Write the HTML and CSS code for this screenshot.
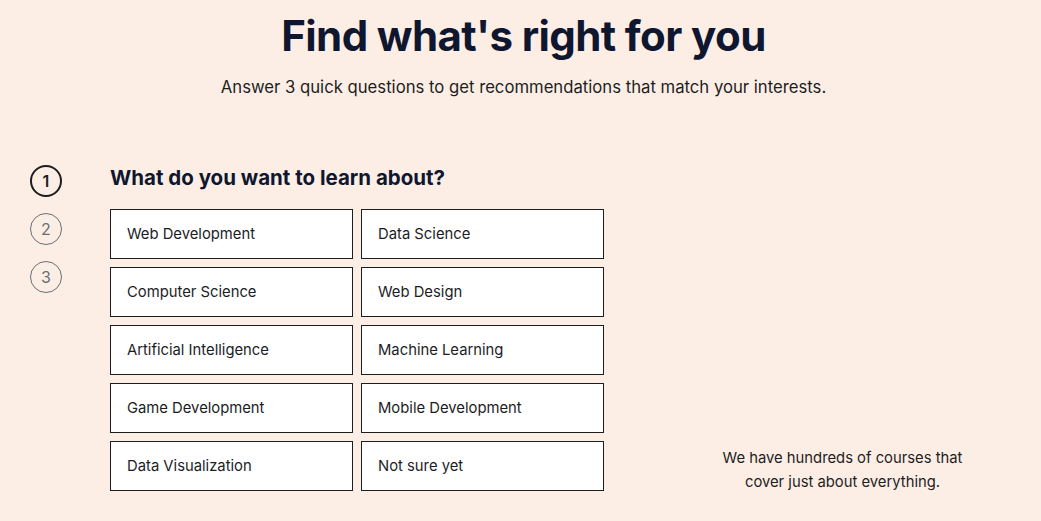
FILE: index.html
```html
<!DOCTYPE html>
<html lang="en">
<head>
<meta charset="utf-8">
<title>Find what's right for you</title>
<link rel="stylesheet" href="styles.css">
</head>
<body>
<header class="hero">
  <h1 class="hero-title">Find what's right for you</h1>
  <p class="hero-sub">Answer 3 quick questions to get recommendations that match your interests.</p>
</header>
<main class="quiz">
  <ol class="steps">
    <li class="step step-active">1</li>
    <li class="step">2</li>
    <li class="step">3</li>
  </ol>
  <section class="question">
    <h2 class="question-title">What do you want to learn about?</h2>
    <div class="options">
      <button class="option">Web Development</button>
      <button class="option">Data Science</button>
      <button class="option">Computer Science</button>
      <button class="option">Web Design</button>
      <button class="option">Artificial Intelligence</button>
      <button class="option">Machine Learning</button>
      <button class="option">Game Development</button>
      <button class="option">Mobile Development</button>
      <button class="option">Data Visualization</button>
      <button class="option">Not sure yet</button>
    </div>
  </section>
  <aside class="note">
    <p>We have hundreds of courses that<br>cover just about everything.</p>
  </aside>
</main>
</body>
</html>
```
FILE: styles.css
```css
* { box-sizing: border-box; }
html, body { margin: 0; padding: 0; }
body {
  background: #fdeee5;
  color: #1c1d1f;
  font-family: "Inter", "Liberation Sans", sans-serif;
  width: 1041px;
  height: 521px;
  overflow: hidden;
}
.hero {
  text-align: center;
  padding-top: 10px;
  padding-left: 6px;
}
.hero-title {
  margin: 0;
  font-size: 42px;
  font-weight: 700;
  line-height: 52px;
  color: #0f1730;
  letter-spacing: -0.6px;
}
.hero-sub {
  margin: 13px 0 0;
  font-size: 16.7px;
  line-height: 24px;
  color: #1c1d1f;
}
.quiz {
  display: flex;
  padding-left: 30px;
  margin-top: 66px;
}
.steps {
  list-style: none;
  margin: 0;
  padding: 0;
  width: 32px;
  display: flex;
  flex-direction: column;
  gap: 16px;
}
.step {
  width: 32px;
  height: 32px;
  border-radius: 50%;
  border: 1px solid #6a6f73;
  color: #6a6f73;
  display: flex;
  align-items: center;
  justify-content: center;
  font-size: 16px;
}
.step-active {
  border: 2px solid #1c1d1f;
  color: #1c1d1f;
  font-weight: 600;
}
.question {
  margin-left: 48px;
  width: 494px;
}
.question-title {
  margin: 0;
  font-size: 20.5px;
  font-weight: 700;
  line-height: 26px;
  color: #0f1730;
}
.options {
  margin-top: 18px;
  display: grid;
  grid-template-columns: 243px 243px;
  gap: 8px;
}
.option {
  height: 50px;
  background: #fff;
  border: 1px solid #1c1d1f;
  padding: 0 16px;
  text-align: left;
  font-family: inherit;
  font-size: 14.8px;
  color: #1c1d1f;
  cursor: pointer;
}
.note {
  flex: 1;
  padding-left: 40px;
  display: flex;
  align-items: flex-end;
  justify-content: center;
}
.note p {
  margin: 0 0 -3px;
  text-align: center;
  font-size: 14.8px;
  line-height: 24px;
  color: #1c1d1f;
}
```
